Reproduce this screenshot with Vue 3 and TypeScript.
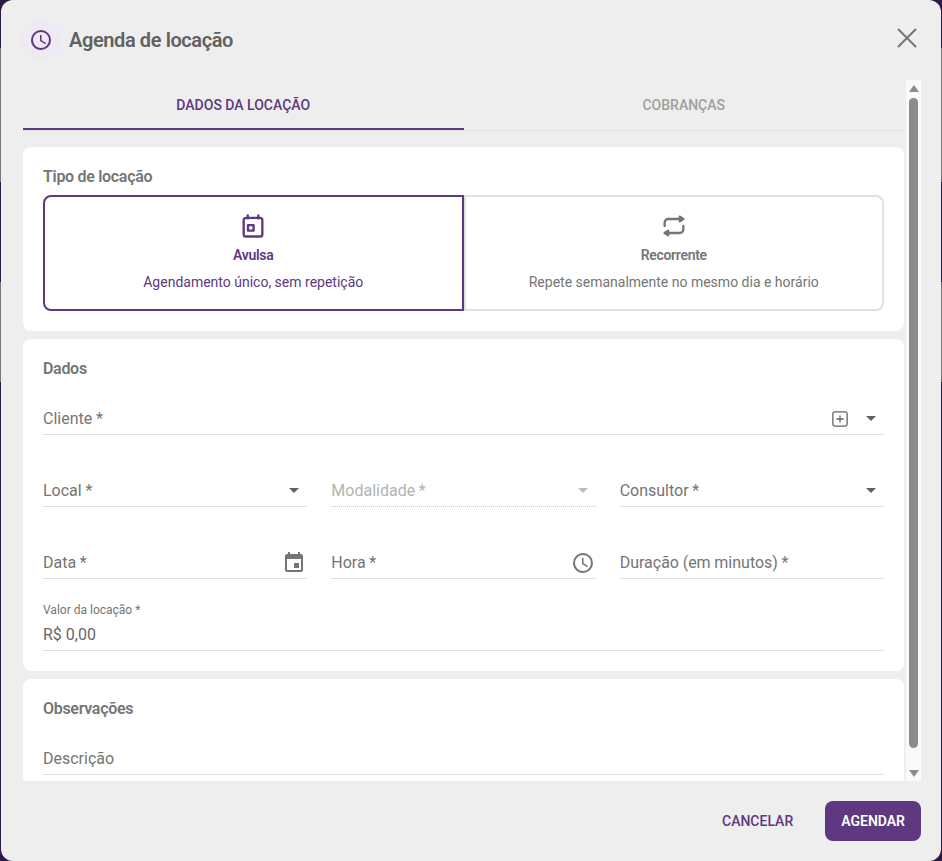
<template>
  <div class="backdrop">
    <div class="dialog">
      <header class="dialog-head">
        <span class="head-icon">
          <svg viewBox="0 0 24 24" width="24" height="24"><path fill="currentColor" d="M12,20A8,8 0 0,0 20,12A8,8 0 0,0 12,4A8,8 0 0,0 4,12A8,8 0 0,0 12,20M12,2A10,10 0 0,1 22,12A10,10 0 0,1 12,22C6.47,22 2,17.5 2,12A10,10 0 0,1 12,2M12.5,7V12.25L17,14.92L16.25,16.15L11,13V7H12.5Z" /></svg>
        </span>
        <h1 class="dialog-title">Agenda de locação</h1>
        <svg class="close" viewBox="0 0 24 24" width="24" height="24"><path fill="none" stroke="currentColor" stroke-width="2" d="M3 3 L21 21 M21 3 L3 21" /></svg>
      </header>

      <div class="dialog-body">
        <div class="content">
          <nav class="tabs">
            <div class="tab active">DADOS DA LOCAÇÃO</div>
            <div class="tab">COBRANÇAS</div>
          </nav>

          <section class="card card-type">
            <h2 class="card-title">Tipo de locação</h2>
            <div class="options">
              <div class="option selected">
                <svg viewBox="0 0 24 24" width="28" height="28" fill="none" stroke="currentColor" stroke-width="2" stroke-linecap="round" stroke-linejoin="round">
                  <path d="M4 7a2 2 0 0 1 2-2h12a2 2 0 0 1 2 2v12a2 2 0 0 1-2 2H6a2 2 0 0 1-2-2z" />
                  <path d="M7.5 3v2.5M16.5 3v2.5" />
                  <path d="M7.7 11.2h4.8v4.7H7.7z" />
                </svg>
                <div class="option-name">Avulsa</div>
                <div class="option-desc">Agendamento único, sem repetição</div>
              </div>
              <div class="option">
                <svg viewBox="0 0 24 24" width="28" height="28" fill="none" stroke="currentColor" stroke-width="2" stroke-linecap="round" stroke-linejoin="round">
                  <path d="M4 12V9a3 3 0 0 1 3-3h12" />
                  <path d="M17 4l3 2-3 2z" fill="currentColor" />
                  <path d="M20 12v3a3 3 0 0 1-3 3H5" />
                  <path d="M7 16l-3 2 3 2z" fill="currentColor" />
                </svg>
                <div class="option-name">Recorrente</div>
                <div class="option-desc">Repete semanalmente no mesmo dia e horário</div>
              </div>
            </div>
          </section>

          <section class="card card-data">
            <h2 class="card-title">Dados</h2>
            <div class="field">
              <span class="field-label">Cliente *</span>
              <svg class="add" viewBox="0 0 16 16" width="16" height="16" fill="none" stroke="currentColor" stroke-width="1.3"><rect x="0.9" y="0.9" width="14.2" height="14.2" rx="1.8" /><path d="M8 4.4v7.2M4.4 8h7.2" /></svg>
              <svg class="caret" viewBox="7 10 10 5" width="10" height="5"><path fill="currentColor" d="M7 10l5 5 5-5z" /></svg>
            </div>
            <div class="field-row">
              <div class="field">
                <span class="field-label">Local *</span>
                <svg class="caret" viewBox="7 10 10 5" width="10" height="5"><path fill="currentColor" d="M7 10l5 5 5-5z" /></svg>
              </div>
              <div class="field disabled">
                <span class="field-label">Modalidade *</span>
                <svg class="caret" viewBox="7 10 10 5" width="10" height="5"><path fill="currentColor" d="M7 10l5 5 5-5z" /></svg>
              </div>
              <div class="field">
                <span class="field-label">Consultor *</span>
                <svg class="caret" viewBox="7 10 10 5" width="10" height="5"><path fill="currentColor" d="M7 10l5 5 5-5z" /></svg>
              </div>
            </div>
            <div class="field-row">
              <div class="field">
                <span class="field-label">Data *</span>
                <svg class="field-icon" viewBox="0 0 24 24" width="24" height="24"><path fill="currentColor" d="M17 12h-5v5h5v-5zM16 1v2H8V1H6v2H5c-1.11 0-1.99.9-1.99 2L3 19c0 1.1.89 2 2 2h14c1.1 0 2-.9 2-2V5c0-1.1-.9-2-2-2h-1V1h-2zm3 18H5V8h14v11z" /></svg>
              </div>
              <div class="field">
                <span class="field-label">Hora *</span>
                <svg class="field-icon" viewBox="0 0 24 24" width="24" height="24"><path fill="currentColor" d="M12,20A8,8 0 0,0 20,12A8,8 0 0,0 12,4A8,8 0 0,0 4,12A8,8 0 0,0 12,20M12,2A10,10 0 0,1 22,12A10,10 0 0,1 12,22C6.47,22 2,17.5 2,12A10,10 0 0,1 12,2M12.5,7V12.25L17,14.92L16.25,16.15L11,13V7H12.5Z" /></svg>
              </div>
              <div class="field">
                <span class="field-label">Duração (em minutos) *</span>
              </div>
            </div>
            <div class="field filled">
              <span class="field-small">Valor da locação *</span>
              <span class="field-value">R$ 0,00</span>
            </div>
          </section>

          <section class="card card-notes">
            <h2 class="card-title">Observações</h2>
            <div class="field">
              <span class="field-label">Descrição</span>
            </div>
          </section>
        </div>

        <div class="scrollbar">
          <span class="arrow up"></span>
          <span class="thumb"></span>
          <span class="arrow down"></span>
        </div>
      </div>

      <footer class="dialog-foot">
        <button class="btn btn-text">CANCELAR</button>
        <button class="btn btn-primary">AGENDAR</button>
      </footer>
    </div>
  </div>
</template>

<script setup lang="ts">
</script>

<style>
html,
body {
  margin: 0;
  background: #2a1a45;
}
</style>

<style scoped>
.backdrop {
  height: 861px;
  width: 942px;
  overflow: hidden;
  padding: 0 1px;
  box-sizing: border-box;
  font-family: Roboto, sans-serif;
  background: linear-gradient(#2a1a45 0 48px, #777 48px 182px, #2a1a45 182px 282px, #777 282px 382px, #2a1a45 382px);
}

.dialog {
  height: 861px;
  background: #eeeeee;
  border-radius: 12px;
  display: flex;
  flex-direction: column;
}

.dialog-head {
  height: 80px;
  flex: none;
  display: flex;
  align-items: center;
  padding: 0 22px 0 20px;
}

.head-icon {
  width: 40px;
  height: 40px;
  border-radius: 50%;
  background: #efe9f4;
  color: #5e3880;
  display: flex;
  align-items: center;
  justify-content: center;
}

.dialog-title {
  margin: 0 0 0 8px;
  flex: 1;
  font-size: 20px;
  font-weight: 600;
  letter-spacing: -0.4px;
  color: #616161;
}

.close {
  color: #757575;
  margin-bottom: 4px;
}

.dialog-body {
  flex: 1;
  min-height: 0;
  display: flex;
  padding: 0 20px 0 22px;
  gap: 2px;
}

.content {
  flex: 1;
  min-width: 0;
  overflow: hidden;
}

.tabs {
  display: flex;
  height: 51px;
  box-sizing: border-box;
  border-bottom: 1px solid #e0e0e0;
  margin-bottom: 16px;
}

.tab {
  flex: 1;
  display: flex;
  align-items: center;
  justify-content: center;
  height: 50px;
  box-sizing: border-box;
  font-size: 14px;
  font-weight: 500;
  color: #9e9e9e;
}

.tab.active {
  color: #5e3880;
  padding-top: 2px;
  border-bottom: 2px solid #5e3880;
}

.card {
  background: #fff;
  border-radius: 8px;
  padding: 20px;
  margin-bottom: 8px;
}

.card-title {
  margin: 0;
  font-size: 16px;
  font-weight: 600;
  letter-spacing: -0.3px;
  line-height: 20px;
  color: #757575;
}

.options {
  display: flex;
  margin-top: 8px;
}

.option {
  flex: 1;
  height: 116px;
  box-sizing: border-box;
  border: 2px solid #e0e0e0;
  border-radius: 0 8px 8px 0;
  color: #757575;
  display: flex;
  flex-direction: column;
  align-items: center;
  padding-top: 15px;
}

.option.selected {
  color: #5e3880;
  border-color: #5e3880;
  border-radius: 8px 0 0 8px;
}

.option-name {
  margin-top: 5px;
  font-size: 14px;
  font-weight: 600;
  letter-spacing: -0.3px;
  line-height: 20px;
}

.option-desc {
  margin-top: 7px;
  font-size: 14px;
  line-height: 20px;
}

.field {
  display: flex;
  align-items: center;
  height: 32px;
  box-sizing: border-box;
  border-bottom: 1px solid #e0e0e0;
  color: #757575;
}

.field-label {
  flex: 1;
  font-size: 16px;
  word-spacing: -0.3px;
}

.field-icon {
  flex: none;
  margin-right: 1px;
}

.add {
  margin-right: 18px;
  color: #616161;
}

.caret {
  margin-right: 8px;
  color: #616161;
}

.card-data .card-title,
.card-notes .card-title {
  margin-bottom: 24px;
}

.field-row {
  display: grid;
  grid-template-columns: repeat(3, 1fr);
  gap: 24px;
  margin-top: 40px;
}

.field.disabled {
  color: #b3b3b3;
  border-bottom: 1px dotted #c4c4c4;
}

.field.disabled .caret {
  color: #bdbdbd;
}

.field.filled {
  height: 48px;
  margin-top: 24px;
  flex-direction: column;
  align-items: flex-start;
}

.field-small {
  font-size: 12px;
  line-height: 14px;
}

.field-value {
  margin-top: 2px;
  font-size: 16px;
  line-height: 32px;
  color: #666;
}

.card-notes {
  height: 102px;
  box-sizing: border-box;
  border-radius: 8px 8px 0 0;
  margin-bottom: 0;
}

.scrollbar {
  width: 15px;
  flex: none;
  background: #fafafa;
  display: flex;
  flex-direction: column;
  align-items: center;
}

.thumb {
  width: 9px;
  height: 650px;
  background: #8c8c8c;
  border-radius: 5px;
  margin: 6px 0 auto;
}

.arrow {
  width: 0;
  height: 0;
  border-left: 5px solid transparent;
  border-right: 5px solid transparent;
}

.arrow.up {
  margin-top: 5px;
  border-bottom: 7px solid #8c8c8c;
}

.arrow.down {
  margin-bottom: 4px;
  border-top: 7px solid #8c8c8c;
}

.dialog-foot {
  height: 80px;
  flex: none;
  display: flex;
  align-items: center;
  justify-content: flex-end;
  gap: 16px;
  padding-right: 20px;
}

.btn {
  height: 40px;
  border: 0;
  border-radius: 8px;
  font-family: inherit;
  font-size: 14px;
  font-weight: 500;
  padding: 0 16px;
}

.btn-text {
  background: transparent;
  color: #5e3880;
}

.btn-primary {
  background: #5e3880;
  color: #fff;
  font-weight: 600;
}
</style>
